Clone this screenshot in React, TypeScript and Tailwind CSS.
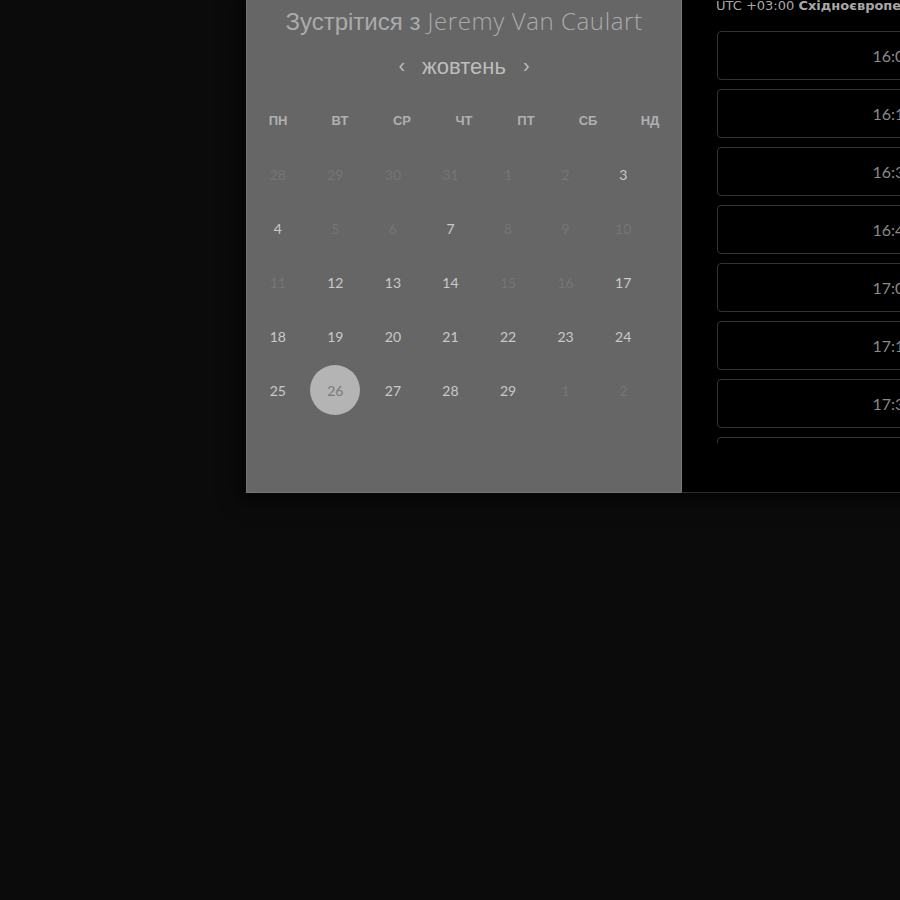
const weekdays = ["пн", "вт", "ср", "чт", "пт", "сб", "нд"];

type Day = { n: number; on?: boolean; sel?: boolean };

const days: Day[] = [
  { n: 28 }, { n: 29 }, { n: 30 }, { n: 31 }, { n: 1 }, { n: 2 }, { n: 3, on: true },
  { n: 4, on: true }, { n: 5 }, { n: 6 }, { n: 7, on: true }, { n: 8 }, { n: 9 }, { n: 10 },
  { n: 11 }, { n: 12, on: true }, { n: 13, on: true }, { n: 14, on: true }, { n: 15 }, { n: 16 }, { n: 17, on: true },
  { n: 18, on: true }, { n: 19, on: true }, { n: 20, on: true }, { n: 21, on: true }, { n: 22, on: true }, { n: 23, on: true }, { n: 24, on: true },
  { n: 25, on: true }, { n: 26, sel: true }, { n: 27, on: true }, { n: 28, on: true }, { n: 29, on: true }, { n: 1 }, { n: 2 },
];

const slots = ["16:00", "16:15", "16:30", "16:45", "17:00", "17:15", "17:30", "17:45"];

export default function App() {
  return (
    <div className="w-[900px] h-[900px] overflow-hidden bg-[#0b0b0b] font-['Lato','Liberation_Sans',sans-serif]">
      <div className="ml-[246px] flex w-[700px] shadow-[0_0_18px_6px_rgba(0,0,0,0.7)]">
        {/* календар */}
        <div className="w-[435px] h-[493px] shrink-0 bg-[#666666] border-l border-b border-[#747474]">
          <h2 className="mt-[6px] h-[30px] flex items-baseline justify-center leading-[30px] text-[#ababab] whitespace-nowrap">
            <span className="mr-[7px] text-[24px] font-['Liberation_Sans',sans-serif]">Зустрітися з</span>
            <span className="text-[24px] tracking-[0.6px] font-light font-['Open_Sans',sans-serif]">Jeremy Van Caulart</span>
          </h2>

          <div className="mt-[16px] h-[30px] flex items-center justify-center gap-[17px] text-[#bdbdbd] font-['Liberation_Sans',sans-serif]">
            <span className="text-[20px] leading-none -mt-[4px]">‹</span>
            <span className="text-[22px] leading-none">жовтень</span>
            <span className="text-[20px] leading-none -mt-[4px]">›</span>
          </div>

          <div className="mt-[29px] h-[20px] grid grid-cols-7 text-center text-[13px] leading-[20px] font-bold uppercase text-[#b0b0b0] font-['Liberation_Sans',sans-serif]">
            {weekdays.map((w) => (
              <div key={w}>{w}</div>
            ))}
          </div>

          <div className="mt-[16px] ml-[2px] w-[403px] grid grid-cols-7">
            {days.map((d, i) => (
              <div key={i} className="h-[54px] flex items-center justify-center">
                {d.sel ? (
                  <span className="w-[50px] h-[50px] rounded-full bg-[#b4b4b4] flex items-center justify-center text-[14px] text-[#7a7a7a]">
                    {d.n}
                  </span>
                ) : (
                  <span className={`text-[14px] ${d.on ? "text-[#c9c9c9]" : "text-[#757575]"}`}>{d.n}</span>
                )}
              </div>
            ))}
          </div>
        </div>

        {/* слоти */}
        <div className="w-[265px] h-[493px] shrink-0 bg-black border-l border-[#7a7a7a] border-b border-b-[#2c2c2c] pl-[34px]">
          <div className="-mt-[2px] h-[16px] text-[13px] leading-[16px] whitespace-nowrap text-[#a8a8a8] font-['DejaVu_Sans',sans-serif]">
            UTC +03:00 <span className="font-bold">Східноєвропейський час</span>
          </div>
          <div className="mt-[17px] ml-[1px] h-[412px] overflow-hidden flex flex-col gap-[9px]">
            {slots.map((s) => (
              <div
                key={s}
                className="w-[352px] h-[49px] shrink-0 rounded-[4px] border border-[#333333] flex items-center justify-center text-[16px] text-[#8a8a8a]"
              >
                {s}
              </div>
            ))}
          </div>
        </div>
      </div>
    </div>
  );
}
